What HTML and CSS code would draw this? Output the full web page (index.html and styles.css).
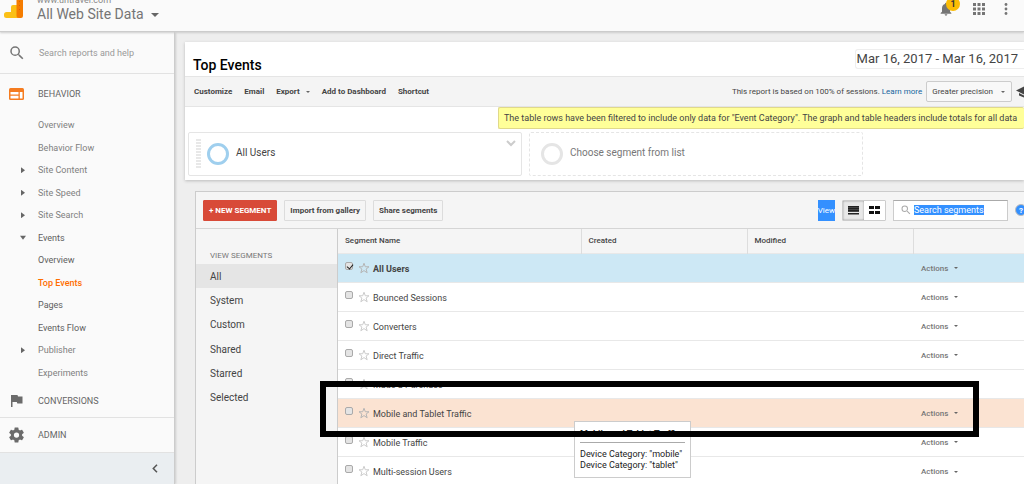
FILE: index.html
```html
<!DOCTYPE html>
<html lang="en">
<head>
<meta charset="utf-8">
<title>Top Events</title>
<link rel="stylesheet" href="styles.css">
</head>
<body>
<svg class="defs" aria-hidden="true">
  <symbol id="star" viewBox="0 0 24 24"><path d="M12 2.5l2.6 7H22l-5.8 4.6 2.1 7.4L12 17.2l-6.3 4.3 2.1-7.4L2 9.5h7.4z" fill="none" stroke="currentColor" stroke-width="2"/></symbol>
  <symbol id="search" viewBox="0 0 24 24"><path fill="currentColor" d="M15.5 14h-.79l-.28-.27A6.47 6.47 0 0 0 16 9.5 6.5 6.5 0 1 0 9.5 16c1.61 0 3.09-.59 4.23-1.57l.27.28v.79l5 4.99L20.49 19l-4.99-5zm-6 0a4.5 4.5 0 1 1 0-9 4.5 4.5 0 0 1 0 9z"/></symbol>
</svg>
<header class="topbar">
  <svg class="logo" viewBox="0 0 20 20"><path d="M13 7H9a2 2 0 0 0-2 2v5H2.500a2.500 2.500 0 0 0-2.500 2.500v1A2.500 2.500 0 0 0 2.500 20H14V7z" fill="#fbc016"/><rect x="12.500" y="-4" width="6.500" height="24" rx="2" fill="#f57c00"/><path d="M15 3h1v1h-1zM15 7h1v1h-1zM15 11h1v1h-1z" fill="#d9600a"/></svg>
  <div class="account">
    <span class="domain">www.untravel.com</span>
    <button class="view-name">All Web Site Data <i class="caret"></i></button>
  </div>
  <div class="top-actions">
    <button class="bell" aria-label="Notifications">
      <svg viewBox="0 0 24 24" width="16" height="16"><path fill="#757575" d="M12 22c1.100 0 2-.9 2-2h-4c0 1.100.9 2 2 2zm6-6v-5c0-3.070-1.640-5.640-4.500-6.320V4a1.500 1.500 0 0 0-3 0v.68C7.630 5.360 6 7.920 6 11v5l-2 2v1h16v-1z"/></svg>
      <span class="badge">1</span>
    </button>
    <button aria-label="Apps"><svg width="12" height="12" viewBox="0 0 12 12" fill="#757575"><path d="M0 0h3v3H0zM4.500 0h3v3h-3zM9 0h3v3H9zM0 4.500h3v3H0zM4.500 4.500h3v3h-3zM9 4.500h3v3H9zM0 9h3v3H0zM4.500 9h3v3h-3zM9 9h3v3H9z"/></svg></button>
    <button aria-label="More"><svg width="4" height="12" viewBox="0 0 4 12" fill="#757575"><circle cx="2" cy="1.500" r="1.400"/><circle cx="2" cy="6" r="1.400"/><circle cx="2" cy="10.500" r="1.400"/></svg></button>
  </div>
</header>
<div class="shell">
  <aside class="sidebar">
    <label class="side-search"><svg><use href="#search"/></svg><input type="text" placeholder="Search reports and help"></label>
    <nav>
      <a class="section" href="#"><svg width="15" height="12" viewBox="0 0 15 12"><rect width="15" height="12" rx="1.500" fill="#f57c20"/><path fill="#fff" d="M1.500 4h8v2.500h-8zM1.500 7.800h8v2.700h-8zM10.800 4h2.700v6.500h-2.700z"/></svg>BEHAVIOR</a>
      <ul class="tree">
        <li><a href="#">Overview</a></li>
        <li><a href="#">Behavior Flow</a></li>
        <li class="closed"><a href="#">Site Content</a></li>
        <li class="closed"><a href="#">Site Speed</a></li>
        <li class="closed"><a href="#">Site Search</a></li>
        <li class="open"><a href="#">Events</a></li>
        <li class="sub"><a href="#">Overview</a></li>
        <li class="sub current"><a href="#">Top Events</a></li>
        <li class="sub"><a href="#">Pages</a></li>
        <li class="sub"><a href="#">Events Flow</a></li>
        <li class="closed"><a href="#">Publisher</a></li>
        <li><a href="#">Experiments</a></li>
      </ul>
      <a class="section conv" href="#"><svg width="15" height="14" viewBox="0 0 15 14"><path fill="#6b6b6b" d="M2 1h6.500l.5 1.500h4.500v7H8.300L7.800 8H3.500v5H2z"/></svg>CONVERSIONS</a>
      <a class="section admin" href="#"><svg width="16" height="16" viewBox="2 2 20 20"><path fill="#6b6b6b" d="M19.430 12.980c.04-.32.07-.64.07-.98s-.03-.66-.07-.98l2.110-1.650c.19-.15.24-.42.12-.64l-2-3.460c-.12-.22-.39-.3-.61-.22l-2.490 1c-.52-.4-1.080-.73-1.690-.98l-.38-2.650A.49.49 0 0 0 14 2h-4c-.25 0-.46.18-.49.42l-.38 2.650c-.61.25-1.170.59-1.690.98l-2.490-1c-.23-.09-.49 0-.61.22l-2 3.460c-.13.22-.07.49.12.64l2.110 1.650c-.04.32-.07.65-.07.98s.03.66.07.98l-2.110 1.650c-.19.15-.24.42-.12.64l2 3.460c.12.22.39.3.61.22l2.490-1c.52.4 1.080.73 1.690.98l.38 2.650c.03.24.24.42.49.42h4c.25 0 .46-.18.49-.42l.38-2.650c.61-.25 1.170-.59 1.690-.98l2.490 1c.23.09.49 0 .61-.22l2-3.460c.12-.22.07-.49-.12-.64zM12 15.500a3.500 3.500 0 1 1 0-7 3.500 3.500 0 0 1 0 7z"/></svg>ADMIN</a>
    </nav>
    <button class="collapse" aria-label="Collapse"><svg width="6" height="9" viewBox="0 0 6 9"><path d="M5 .7L1.300 4.500 5 8.300" fill="none" stroke="#555" stroke-width="1.500"/></svg></button>
  </aside>
  <main class="content">
    <section class="report">
      <div class="heading"><h1>Top Events</h1><button class="dates">Mar 16, 2017 - Mar 16, 2017</button></div>
      <div class="toolbar">
        <button>Customize</button><button>Email</button><button>Export <i class="caret small"></i></button><button>Add to Dashboard</button><button>Shortcut</button>
        <p>This report is based on 100% of sessions. <a href="#">Learn more</a></p>
        <button class="precision">Greater precision <i class="caret small"></i></button>
        <svg class="cap" width="18" height="12" viewBox="0 0 18 12"><path fill="#444" d="M0 4.500L9 0l9 4.500L9 9zM3 7l6 3 6-3v2.500L9 12 3 9.500z"/></svg>
      </div>
      <div class="notice">The table rows have been filtered to include only data for "Event Category". The graph and table headers include totals for all data</div>
      <div class="cards">
        <div class="card"><i class="grip"></i><i class="ring"></i><span>All Users</span><svg class="chev" width="10" height="7" viewBox="0 0 10 7"><path d="M1 1l4 4 4-4" fill="none" stroke="#ccc" stroke-width="2"/></svg></div>
        <div class="card empty"><i class="ring"></i><span>Choose segment from list</span></div>
      </div>
    </section>
    <section class="segments">
      <div class="seg-bar">
        <button class="btn red">+ NEW SEGMENT</button><button class="btn">Import from gallery</button><button class="btn">Share segments</button>
        <span class="view-label">View</span>
        <div class="toggle">
          <button class="on" aria-label="List"><svg width="11" height="9" viewBox="0 0 11 9"><path fill="#444" d="M0 0h11v6H0z"/><path fill="#222" d="M0 0h11v1H0zM0 2h11v1H0zM0 4h11v1H0zM0 7h11v1.500H0z"/></svg></button>
          <button aria-label="Grid"><svg width="11" height="8" viewBox="0 0 11 8"><path fill="#111" d="M0 0h5v3H0zM6 0h5v3H6zM0 5h5v3H0zM6 5h5v3H6z"/></svg></button>
        </div>
        <label class="seg-search"><svg><use href="#search"/></svg><input type="text" placeholder="Search segments"></label>
        <button class="help" aria-label="Help">?</button>
      </div>
      <div class="seg-body">
        <nav class="seg-nav">
          <h2>VIEW SEGMENTS</h2>
          <ul><li class="sel"><a href="#">All</a></li><li><a href="#">System</a></li><li><a href="#">Custom</a></li><li><a href="#">Shared</a></li><li><a href="#">Starred</a></li><li><a href="#">Selected</a></li></ul>
        </nav>
        <table>
          <colgroup><col class="c-name"><col class="c-date"><col class="c-date"><col></colgroup>
          <thead><tr><th>Segment Name</th><th>Created</th><th>Modified</th><th></th></tr></thead>
          <tbody>
            <tr class="picked"><td><label><input type="checkbox" checked><svg class="star"><use href="#star"/></svg>All Users</label></td><td></td><td></td><td><button>Actions <i class="caret small"></i></button></td></tr>
            <tr><td><label><input type="checkbox"><svg class="star"><use href="#star"/></svg>Bounced Sessions</label></td><td></td><td></td><td><button>Actions <i class="caret small"></i></button></td></tr>
            <tr><td><label><input type="checkbox"><svg class="star"><use href="#star"/></svg>Converters</label></td><td></td><td></td><td><button>Actions <i class="caret small"></i></button></td></tr>
            <tr><td><label><input type="checkbox"><svg class="star"><use href="#star"/></svg>Direct Traffic</label></td><td></td><td></td><td><button>Actions <i class="caret small"></i></button></td></tr>
            <tr><td><label><input type="checkbox"><svg class="star"><use href="#star"/></svg>Made a Purchase</label></td><td></td><td></td><td><button>Actions <i class="caret small"></i></button></td></tr>
            <tr class="hover"><td><label><input type="checkbox"><svg class="star"><use href="#star"/></svg>Mobile and Tablet Traffic</label></td><td></td><td></td><td><button>Actions <i class="caret small"></i></button></td></tr>
            <tr><td><label><input type="checkbox"><svg class="star"><use href="#star"/></svg>Mobile Traffic</label></td><td></td><td></td><td><button>Actions <i class="caret small"></i></button></td></tr>
            <tr><td><label><input type="checkbox"><svg class="star"><use href="#star"/></svg>Multi-session Users</label></td><td></td><td></td><td><button>Actions <i class="caret small"></i></button></td></tr>
          </tbody>
        </table>
      </div>
    </section>
  </main>
</div>
<div class="tooltip" role="tooltip"><strong>Mobile and Tablet Traffic</strong><p>Device Category: "mobile"<br>Device Category: "tablet"</p></div>
<div class="marker"></div>
</body>
</html>
```
FILE: styles.css
```css
* { box-sizing: border-box; margin: 0; padding: 0; }
html, body { height: 100%; overflow: hidden; }
body { display: flex; flex-direction: column; font-family: Roboto, "Liberation Sans", sans-serif; font-size: 10px; color: #444; background: #eee; }
button, input { font: inherit; color: inherit; border: 0; background: none; }
button { white-space: nowrap; }
a { color: inherit; text-decoration: none; }
ul { list-style: none; }
svg { flex: none; display: block; }
.defs { position: absolute; width: 0; height: 0; }
.caret { display: inline-block; border: 4px solid transparent; border-top-color: #666; border-bottom: 0; vertical-align: middle; margin-left: 4px; }
.caret.small { border-width: 2px; border-bottom: 0; margin-left: 4px; }

.topbar { flex: none; height: 32px; display: flex; align-items: flex-end; overflow: hidden; background: #fafafa; border-bottom: 1px solid #ccc; box-shadow: 0 1px 2px #ccc; position: relative; z-index: 1; }
.logo { width: 20px; height: 20px; margin: 0 13px 13px 4px; overflow: visible; }
.account { display: flex; flex-direction: column; color: #757575; padding-bottom: 8px; }
.domain { font-size: 9px; line-height: 10px; color: #888; }
.view-name { font-size: 14px; line-height: 18px; text-align: left; }
.top-actions { display: flex; align-items: center; gap: 19px; margin-left: auto; padding: 0 16px 14px 0; height: 31px; }
.bell { position: relative; }
.badge { position: absolute; left: 8px; top: -4px; width: 14px; height: 14px; border-radius: 50%; background: #fbbc05; color: #333; font-weight: 700; font-size: 9px; line-height: 14px; }

.shell { flex: 1; display: flex; min-height: 0; }
.sidebar { flex: none; width: 175px; display: flex; flex-direction: column; background: #fafafa; border-right: 1px solid #ccc; box-shadow: 1px 0 2px #ccc; color: #757575; font-size: 9px; }
.side-search { display: flex; align-items: center; height: 42px; border-bottom: 1px solid #e2e2e2; padding-left: 8px; gap: 13px; }
.side-search svg { width: 18px; height: 18px; }
.side-search input { width: 130px; }
::placeholder { color: #999; opacity: 1; }
.section { display: flex; align-items: center; height: 40px; padding-left: 9px; gap: 14px; color: #666; }
.section svg { width: 15px; }
.tree { display: grid; grid-template-rows: repeat(12, 1fr); height: 270px; }
.tree li { display: flex; align-items: center; padding-left: 38px; color: #808080; }
.tree .closed, .tree .open { padding-left: 20px; }
.closed::before, .open::before { content: ""; width: 18px; height: 6px; background: #666; clip-path: polygon(1px 0, 5px 3px, 1px 6px); }
.open::before { clip-path: polygon(0 1px, 6px 1px, 3px 5px); }
.tree .open, .tree .sub { color: #606060; }
.tree .current { color: #ff6d00; font-weight: 500; }
.conv { height: 33px; }
.admin { height: 36px; border-top: 1px solid #e2e2e2; border-bottom: 1px solid #e2e2e2; }
.collapse { flex: 1; background: #eaeef1; display: flex; justify-content: flex-end; align-items: center; padding-right: 16px; }

.content { flex: 1; min-width: 0; padding: 10px 0 0 10px; display: flex; flex-direction: column; }
.report { position: relative; background: #fff; box-shadow: 0 1px 3px #bbb; }
.heading { display: flex; justify-content: space-between; align-items: center; height: 34px; padding-left: 8px; }
h1 { font-size: 14px; font-weight: 500; color: #000; padding-top: 12px; }
.dates { font-size: 13px; color: #444; border: 1px solid #eee; border-right: 0; border-radius: 3px 0 0 3px; padding: 0 6px 0 1px; line-height: 18px; }
.toolbar { display: flex; align-items: center; height: 31px; background: #f4f4f4; border-top: 1px solid #e5e5e5; border-bottom: 1px solid #e5e5e5; padding-left: 9px; gap: 12px; font-size: 8px; font-weight: 700; overflow: hidden; }
.toolbar p { margin-left: auto; font-weight: 400; white-space: nowrap; }
.toolbar p a { color: #15659e; }
.precision { height: 21px; border: 1px solid #ccc; border-radius: 2px; padding: 0 6px 0 5px; font-weight: 400; background: #f8f8f8; margin-left: -8px; }
.precision .caret { margin-left: 6px; }
.cap { margin: 0 -10px 0 -8px; }
.notice { position: absolute; left: 313px; right: 0; top: 65px; height: 22px; line-height: 20px; font-size: 9px; padding-left: 5px; background: #ffff99; border: 1px solid #e0d98a; border-right: 0; border-radius: 2px; white-space: nowrap; overflow: hidden; }
.cards { display: flex; gap: 7px; padding: 25px 0 4px 3px; }
.card { position: relative; width: 334px; height: 44px; border: 1px solid #e5e5e5; border-radius: 2px; display: flex; align-items: center; padding: 0 7px; }
.card span { margin: 0 0 3px 7px; }
.grip { width: 5px; height: 30px; margin-right: 6px; background: repeating-linear-gradient(#e8e8e8 0 2px, #fff 2px 3px); }
.ring { width: 22px; height: 22px; border: 3px solid #9fcfee; border-radius: 50%; }
.chev { position: absolute; right: 5px; top: 7px; }
.card.empty { border-style: dashed; padding-left: 11px; color: #777; }
.empty .ring { border-color: #e5e5e5; }

.segments { flex: 1; margin: 11px 0 0 10px; border: 1px solid #ccc; border-width: 1px 0 0 1px; background: #f5f5f5; display: flex; flex-direction: column; min-height: 0; }
.seg-bar { display: flex; align-items: center; height: 37px; border-bottom: 1px solid #d5d5d5; padding-left: 7px; gap: 7px; font-size: 8px; overflow: hidden; }
.btn { height: 21px; padding: 0 5px; border: 1px solid #dcdcdc; border-radius: 1px; font-weight: 700; }
.btn.red { background: #d84a38; border-color: #d84a38; color: #fff; }
.view-label { margin-left: auto; background: #3390ff; color: #fff; line-height: 21px; }
.toggle { display: flex; height: 21px; border: 1px solid #ccc; border-radius: 1px; background: #fff; }
.toggle button { width: 21px; display: flex; align-items: center; justify-content: center; }
.toggle .on { background: #e8e8e8; box-shadow: inset 0 0 2px #888; }
.seg-search { display: flex; align-items: center; width: 115px; height: 21px; background: #fff; border: 1px solid #ccc; border-top-color: #aaa; padding-left: 6px; gap: 2px; color: #aaa; font-size: 9px; }
.seg-search svg { width: 12px; height: 12px; }
.seg-search input { width: 70px; }
.seg-search ::placeholder { color: #fff; background: #3390ff; }
.help { width: 12px; height: 12px; margin-right: -3px; border-radius: 50%; background: #3390ff; border: 1px solid #bbb; color: #fff; font-weight: 700; }
.seg-body { flex: 1; display: flex; min-height: 0; }
.seg-nav { flex: none; width: 142px; border-right: 1px solid #ccc; }
h2 { font-size: 8px; font-weight: 400; color: #777; padding-left: 14px; line-height: 10px; margin: 22px 0 3px; }
.seg-nav ul { display: grid; grid-template-rows: repeat(6, 1fr); height: 146px; }
.seg-nav li { display: flex; align-items: center; padding-left: 14px; }
.sel { background: #e5e5e5; }
table { flex: 1; align-self: flex-start; table-layout: fixed; border-collapse: collapse; }
.c-name { width: 243px; }
.c-date { width: 166px; }
th { height: 24px; padding-left: 7px; text-align: left; font-size: 8px; font-weight: 500; border-left: 1px solid #ddd; }
th:first-child { border-left: 0; }
td { height: 29px; background: #fff; border-top: 1px solid #e8e8e8; padding-left: 7px; font-size: 9px; }
td:last-child { padding-left: 8px; }
td label { display: flex; align-items: center; line-height: 12px; padding-top: 2px; }
.picked td { background: #cde8f5; }
.picked label { font-weight: 700; }
.hover td { background: #fbe3d2; }
.star { width: 12px; height: 12px; margin: 0 3px 2px 5px; color: #ccc; }
.picked .star, .hover .star { color: #b5b5b5; }
td input { appearance: none; width: 8px; height: 8px; border: 1px solid #aaa; border-radius: 2px; background: #e4e4e4; margin-bottom: 6px; position: relative; }
td input:checked::after { content: ""; position: absolute; left: 2px; top: 0; width: 3px; height: 5px; border: solid #222; border-width: 0 1px 1px 0; transform: rotate(40deg); }
td button { font-size: 8px; font-weight: 500; color: #777; }
.tooltip { position: absolute; left: 574px; top: 421px; width: 117px; height: 57px; background: #fff; border: 1px solid #ccc; padding: 5px; color: #222; white-space: nowrap; font-size: 9px; }
.tooltip strong { display: block; border-bottom: 1px solid #aaa; line-height: 15px; margin-bottom: 6px; font-size: 9px; }
.tooltip p { line-height: 11px; }
.marker { position: absolute; left: 320px; top: 381px; width: 659px; height: 56px; border: 6px solid #000; }
```
